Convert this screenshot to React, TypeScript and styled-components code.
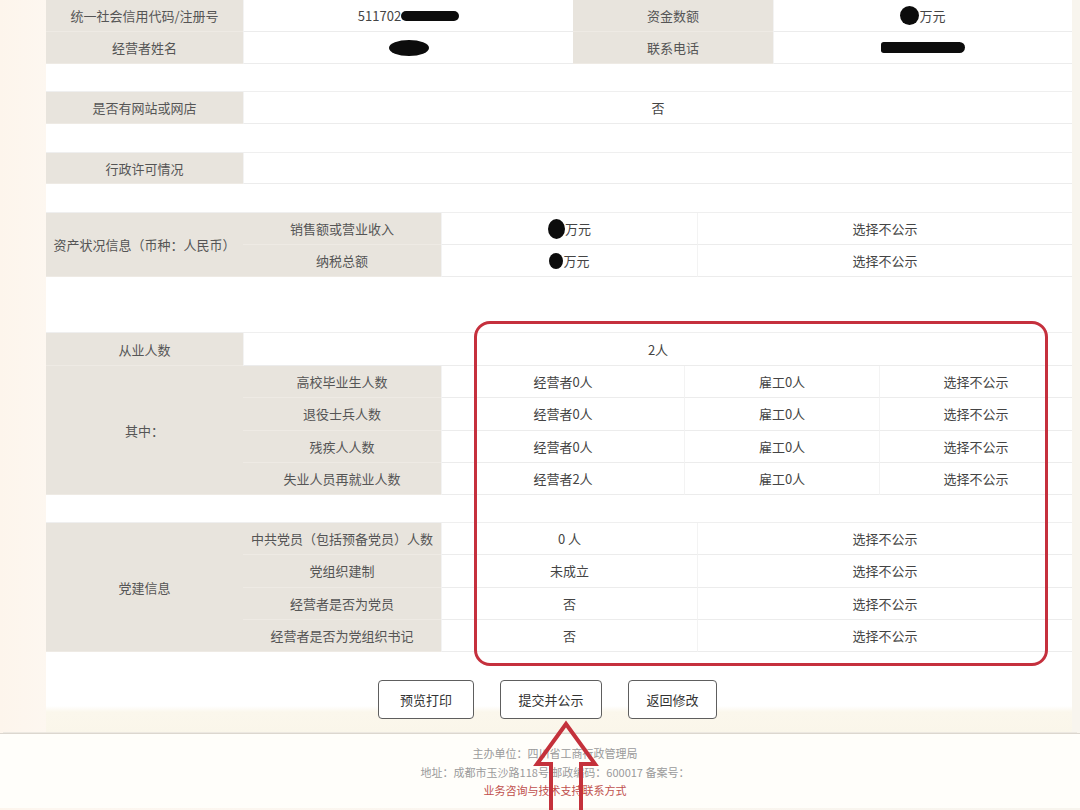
import styled, { createGlobalStyle } from "styled-components";

const GlobalStyle = createGlobalStyle`
  html, body {
    margin: 0;
    padding: 0;
    background: #fdf7ef;
  }
  body {
    font-family: "Noto Sans CJK SC", "Noto Sans", sans-serif;
  }
`;

const Page = styled.div`
  position: relative;
  width: 1080px;
  height: 810px;
  overflow: hidden;
  background: linear-gradient(to right, #fdf5ec 0, #fdf7f0 46px, #f8f5ee 1072px);
`;

const Main = styled.div`
  margin: 0 8px 0 46px;
  background: #fff;
`;

const Block = styled.div<{ $cols: string; $rows: string }>`
  display: grid;
  grid-template-columns: ${(p) => p.$cols};
  grid-template-rows: ${(p) => p.$rows};
`;

const Label = styled.div<{ $span?: number }>`
  grid-row: span ${(p) => p.$span ?? 1};
  box-sizing: border-box;
  background: #e8e4dd;
  display: flex;
  align-items: center;
  justify-content: center;
  color: #555;
  font-size: 13px;
  border-bottom: 1px solid #eeeae4;
`;

const Value = styled.div<{ $span?: number }>`
  grid-column: span ${(p) => p.$span ?? 1};
  box-sizing: border-box;
  display: flex;
  align-items: center;
  justify-content: center;
  color: #444;
  font-size: 13px;
  border-bottom: 1px solid #ececec;
  border-left: 1px solid #f3f3f3;
`;

const Spacer = styled.div<{ $h: number }>`
  box-sizing: border-box;
  height: ${(p) => p.$h}px;
  border-bottom: 1px solid #efefef;
`;

const Redact = styled.span<{ $w: number; $h: number; $r?: string }>`
  display: inline-block;
  width: ${(p) => p.$w}px;
  height: ${(p) => p.$h}px;
  background: #0c0c0c;
  border-radius: ${(p) => p.$r ?? "50%"};
`;

const ActionBar = styled.div`
  height: 81px;
  box-sizing: border-box;
  padding: 28px 0 0 332px;
  display: flex;
  gap: 26px;
  align-items: flex-start;
  background: linear-gradient(to bottom, #fff 0, #fff 54px, #fbf7ec 60px, #faf6ea 81px);
`;

const Button = styled.button<{ $w: number }>`
  width: ${(p) => p.$w}px;
  height: 39px;
  background: #fff;
  border: 1px solid #5e5e5e;
  border-radius: 4px;
  color: #333;
  font-family: "Noto Sans CJK SC", sans-serif;
  font-size: 13px;
  padding: 0;
`;

const Footer = styled.footer`
  height: 75px;
  box-sizing: border-box;
  border-top: 1px solid #dcd7cf;
  box-shadow: 0 -4px 0 -3px #ece8e1;
  background: #fffefa;
  padding: 10px 0 0 30px;
  text-align: center;
  font-size: 11px;
  line-height: 18.5px;
  color: #9a9a9a;
`;

const FooterLink = styled.div`
  color: #c0504d;
`;

const RedBox = styled.div`
  position: absolute;
  left: 474px;
  top: 321px;
  width: 574px;
  height: 345px;
  box-sizing: border-box;
  border: 3px solid #c5303d;
  border-radius: 16px;
  pointer-events: none;
`;

const Arrow = styled.svg`
  position: absolute;
  left: 530px;
  top: 718px;
`;

const employees = [
  { name: "高校毕业生人数", boss: "经营者0人" },
  { name: "退役士兵人数", boss: "经营者0人" },
  { name: "残疾人人数", boss: "经营者0人" },
  { name: "失业人员再就业人数", boss: "经营者2人" },
];

const party = [
  { name: "中共党员（包括预备党员）人数", value: "0 人" },
  { name: "党组织建制", value: "未成立" },
  { name: "经营者是否为党员", value: "否" },
  { name: "经营者是否为党组织书记", value: "否" },
];

export default function App() {
  return (
    <Page>
      <GlobalStyle />
      <Main>
        <Block $cols="197px 330px 200px 299px" $rows="32px 32px">
          <Label>统一社会信用代码/注册号</Label>
          <Value>
            511702
            <Redact $w={58} $h={10} $r="5px" />
          </Value>
          <Label>资金数额</Label>
          <Value>
            <Redact $w={19} $h={19} />
            万元
          </Value>
          <Label>经营者姓名</Label>
          <Value>
            <Redact $w={40} $h={16} />
          </Value>
          <Label>联系电话</Label>
          <Value>
            <Redact $w={84} $h={11} $r="4px 8px 8px 4px" />
          </Value>
        </Block>
        <Spacer $h={28} />
        <Block $cols="197px 829px" $rows="32px">
          <Label>是否有网站或网店</Label>
          <Value>否</Value>
        </Block>
        <Spacer $h={29} />
        <Block $cols="197px 829px" $rows="31px">
          <Label>行政许可情况</Label>
          <Value />
        </Block>
        <Spacer $h={29} />
        <Block $cols="197px 198px 256px 375px" $rows="32px 32px">
          <Label $span={2}>资产状况信息（币种：人民币）</Label>
          <Label>销售额或营业收入</Label>
          <Value>
            <Redact $w={17} $h={20} />
            万元
          </Value>
          <Value>选择不公示</Value>
          <Label>纳税总额</Label>
          <Value>
            <Redact $w={14} $h={16} />
            万元
          </Value>
          <Value>选择不公示</Value>
        </Block>
        <Spacer $h={56} />
        <Block $cols="197px 198px 243px 195px 193px" $rows="33px repeat(4, 32.25px)">
          <Label>从业人数</Label>
          <Value $span={4}>2人</Value>
          <Label $span={4}>其中：</Label>
          {employees.map((e) => (
            <>
              <Label key={e.name}>{e.name}</Label>
              <Value>{e.boss}</Value>
              <Value>雇工0人</Value>
              <Value>选择不公示</Value>
            </>
          ))}
        </Block>
        <Spacer $h={28} />
        <Block $cols="197px 198px 256px 375px" $rows="repeat(4, 32.25px)">
          <Label $span={4}>党建信息</Label>
          {party.map((p) => (
            <>
              <Label key={p.name}>{p.name}</Label>
              <Value>{p.value}</Value>
              <Value>选择不公示</Value>
            </>
          ))}
        </Block>
        <ActionBar>
          <Button $w={96}>预览打印</Button>
          <Button $w={102}>提交并公示</Button>
          <Button $w={89}>返回修改</Button>
        </ActionBar>
      </Main>
      <Footer>
        <div>主办单位：四川省工商行政管理局</div>
        <div>地址：成都市玉沙路118号 邮政编码：600017 备案号：</div>
        <FooterLink>业务咨询与技术支持联系方式</FooterLink>
      </Footer>
      <RedBox />
      <Arrow width="72" height="96" viewBox="0 0 72 96">
        <polygon
          points="36,6 65,46 51,46 51,100 21,100 21,46 7,46"
          fill="none"
          stroke="#c4313b"
          strokeWidth="4"
          strokeLinejoin="miter"
        />
      </Arrow>
    </Page>
  );
}
